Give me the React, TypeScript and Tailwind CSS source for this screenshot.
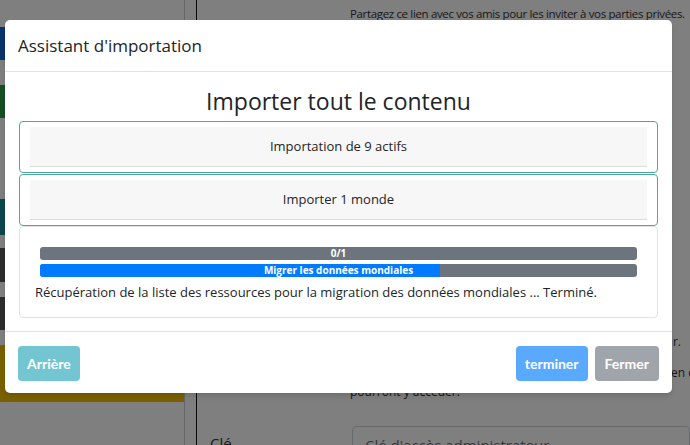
import React from 'react';

const SideBlock = ({ color, h, label }: { color: string; h: string; label?: string }) => (
  <div className={`${h} ${color} flex items-center text-[13px] text-white overflow-hidden`}>{label}</div>
);

const Card = ({ children, teal }: { children: React.ReactNode; teal?: boolean }) => (
  <div className={`rounded-[4px] border ${teal ? 'border-[#4fa7a0]' : 'border-[#e2e2e2]'}`}>{children}</div>
);

export default function App() {
  const fill = 67;

  return (
    <div className="relative w-[690px] h-[445px] overflow-hidden bg-white" style={{ fontFamily: '"Open Sans", "Noto Sans", sans-serif' }}>
      {/* page behind the modal */}
      <div className="flex h-full">
        <div className="w-[185px] shrink-0 border-r border-[#ccc] flex flex-col pt-[27px]">
          <SideBlock color="bg-[#1766d6]" h="h-[33px]" />
          <div className="h-[25px]" />
          <SideBlock color="bg-[#2e9e4a]" h="h-[33px]" />
          <div className="h-[81px]" />
          <SideBlock color="bg-[#1a8f9b]" h="h-[36px]" />
          <div className="h-[13px]" />
          <SideBlock color="bg-[#5b5b5b]" h="h-[34px]" />
          <div className="h-[15px]" />
          <SideBlock color="bg-[#5b5b5b]" h="h-[33px]" />
          <div className="h-[15px]" />
          <SideBlock color="bg-[#f2c200]" h="h-[57px]" />
        </div>
        <div className="w-[12px] shrink-0 border-r border-[#111]" />
        <div className="flex-1 min-w-0 text-[12px] text-[#333] overflow-hidden">
          <p className="pl-[153px] pt-[5px] whitespace-nowrap tracking-[-0.35px] text-[11.5px]">Partagez ce lien avec vos amis pour les inviter à vos parties privées.</p>
          <div className="pl-[153px] mt-[309px] w-[497px] leading-[21px] whitespace-nowrap">
            <p className="text-right pr-[13px]">Entrez une clé pour le joueur.</p>
            <p className="mt-[10px] text-right">Les administrateurs disposant du lien en c</p>
            <p className="-mt-[2px]">pourront y accéder.</p>
          </div>
          <div className="mt-[24px] flex items-start">
            <span className="w-[155px] shrink-0 pl-[13px] pt-[6px] text-[15px]">Clé</span>
            <div className="flex-1 h-[36px] border border-[#ced4da] rounded-[4px] px-[12px] pt-[7px] text-[15px] text-[#6c757d] whitespace-nowrap">Clé d'accès administrateur</div>
          </div>
        </div>
      </div>

      {/* backdrop */}
      <div className="absolute inset-0 bg-black/50" />

      {/* modal */}
      <div className="absolute left-[5px] top-[20px] w-[667px] rounded-[5px] bg-white shadow-md">
        <div className="h-[52px] flex items-center px-[13px] border-b border-[#dee2e6]">
          <h5 className="text-[17px] text-[#212529]">Assistant d'importation</h5>
        </div>

        <div className="px-[14px] pt-[14px] pb-[13px] h-[259px]">
          <h2 className="text-center text-[23px] leading-[30px] text-[#212529] mb-[5px]">Importer tout le contenu</h2>
          <Card teal>
            <div className="px-[10px] py-[5px]">
              <div className="h-[40px] bg-[#f7f7f7] border-b border-[#dcdcdc] flex items-center justify-center text-[13px] text-[#212529]">
                Importation de 9 actifs
              </div>
            </div>
          </Card>
          <div className="h-[1px]" />
          <Card teal>
            <div className="px-[10px] py-[5px]">
              <div className="h-[40px] bg-[#f7f7f7] border-b border-[#dcdcdc] flex items-center justify-center text-[13px] text-[#212529]">
                Importer 1 monde
              </div>
            </div>
          </Card>
          <Card>
            <div className="pt-[20px] pb-[14px] px-[15px]">
              <div className="px-[5px] flex flex-col gap-[4px]">
                <div className="relative h-[13px] rounded-[3px] bg-[#6c757d]">
                  <span className="absolute inset-0 flex items-center justify-center text-[10px] font-bold text-white">0/1</span>
                </div>
                <div className="relative h-[13px] rounded-[3px] bg-[#6c757d] overflow-hidden">
                  <div className="h-full bg-[#007bff]" style={{ width: `${fill}%` }} />
                  <span className="absolute inset-0 flex items-center justify-center text-[10px] font-bold text-white">Migrer les données mondiales</span>
                </div>
              </div>
              <p className="mt-[4px] text-[13px] leading-[22px] text-[#212529]">
                Récupération de la liste des ressources pour la migration des données mondiales ... Terminé.
              </p>
            </div>
          </Card>
        </div>

        <div className="h-[62px] border-t border-[#dee2e6] px-[13px] pt-[1px] flex items-center" style={{ fontFamily: 'Lato, sans-serif' }}>
          <button className="h-[35px] px-[9px] rounded-[4px] bg-[#74c5d2] text-white text-[14px] font-bold">Arrière</button>
          <div className="flex-1" />
          <button className="h-[35px] px-[9px] rounded-[4px] bg-[#59a9ff] text-white text-[14px] font-bold">terminer</button>
          <button className="ml-[7px] h-[35px] px-[10px] rounded-[4px] bg-[#9fa5aa] text-white text-[14px] font-bold">Fermer</button>
        </div>
      </div>
    </div>
  );
}
